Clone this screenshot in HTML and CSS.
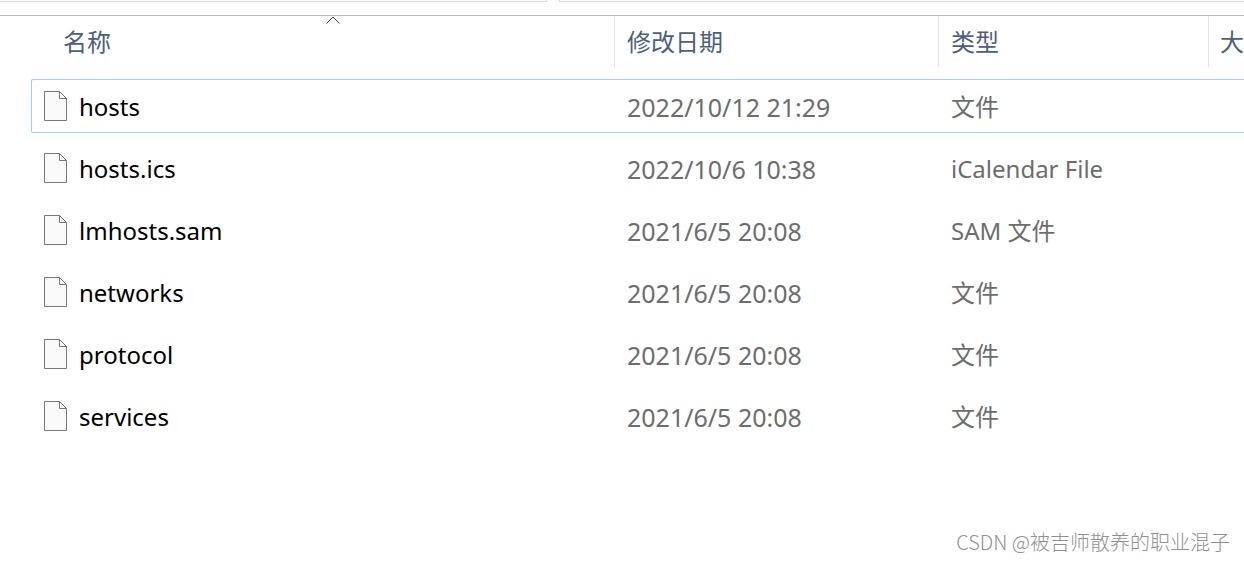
FILE: index.html
```
<!DOCTYPE html>
<html lang="zh-CN">
  <head>
    <meta charset="UTF-8" />
    <meta name="viewport" content="width=device-width, initial-scale=1.0" />
    <title>etc</title>
    <link rel="stylesheet" href="styles.css">
  </head>
  <body>
    <svg class="sprite" aria-hidden="true">
      <symbol id="file" viewBox="0 0 23 30">
        <path d="M.5 .5H15.500L22.500 7.500V29.500H.5Z" fill="#fafafa" stroke="#777" />
        <path d="M15.500 .5V7.500H22.500" fill="none" stroke="#777" />
      </symbol>
    </svg>

    <div class="toolbar">
      <div class="address"></div>
      <div class="search"></div>
    </div>

    <main class="files">
      <table>
        <colgroup>
          <col class="col-name" />
          <col class="col-date" />
          <col class="col-type" />
          <col />
        </colgroup>
        <thead>
          <tr>
            <th>
              <div class="head first">
                名称
                <svg class="sort" width="14" height="8" viewBox="0 0 14 8">
                  <path d="M.5 7.500L7 1L13.500 7.500" fill="none" stroke="#444" />
                </svg>
              </div>
            </th>
            <th><div class="head">修改日期</div></th>
            <th><div class="head">类型</div></th>
            <th><div class="head last">大</div></th>
          </tr>
        </thead>
        <tbody>
          <tr class="focused">
            <td><div class="name"><svg class="icon"><use href="#file" /></svg>hosts</div></td>
            <td class="date">2022/10/12 21:29</td>
            <td>文件</td>
            <td></td>
          </tr>
          <tr>
            <td><div class="name"><svg class="icon"><use href="#file" /></svg>hosts.ics</div></td>
            <td class="date">2022/10/6 10:38</td>
            <td>iCalendar File</td>
            <td></td>
          </tr>
          <tr>
            <td><div class="name"><svg class="icon"><use href="#file" /></svg>lmhosts.sam</div></td>
            <td class="date">2021/6/5 20:08</td>
            <td>SAM 文件</td>
            <td></td>
          </tr>
          <tr>
            <td><div class="name"><svg class="icon"><use href="#file" /></svg>networks</div></td>
            <td class="date">2021/6/5 20:08</td>
            <td>文件</td>
            <td></td>
          </tr>
          <tr>
            <td><div class="name"><svg class="icon"><use href="#file" /></svg>protocol</div></td>
            <td class="date">2021/6/5 20:08</td>
            <td>文件</td>
            <td></td>
          </tr>
          <tr>
            <td><div class="name"><svg class="icon"><use href="#file" /></svg>services</div></td>
            <td class="date">2021/6/5 20:08</td>
            <td>文件</td>
            <td></td>
          </tr>
        </tbody>
      </table>
    </main>

    <div class="watermark">CSDN @被吉师散养的职业混子</div>
  </body>
</html>
```

FILE: styles.css
```
* {
  margin: 0;
  padding: 0;
  box-sizing: border-box;
}

body {
  font-family: "Noto Sans", "Noto Sans CJK SC", sans-serif;
  font-size: 24px;
  line-height: 32px;
  background: #fff;
  color: #6d6d6d;
  min-height: 100vh;
  position: relative;
  overflow: hidden;
}

.sprite {
  position: absolute;
  width: 0;
  height: 0;
}

.toolbar {
  display: flex;
  gap: 12px;
  height: 16px;
  border-bottom: 1px solid #b8b8b8;
}

.address,
.search {
  height: 2px;
  border-bottom: 1px solid #d9d9d9;
}

.address {
  width: 44%;
  border-right: 1px solid #d9d9d9;
}

.search {
  flex: 1;
  border-left: 1px solid #d9d9d9;
}

.files {
  padding-left: 31px;
}

table {
  width: 100%;
  table-layout: fixed;
  border-collapse: collapse;
}

.col-name {
  width: 584px;
}

.col-date {
  width: 324px;
}

.col-type {
  width: 270px;
}

th {
  height: 59px;
  vertical-align: top;
  text-align: left;
  font-weight: normal;
  color: #4c607a;
}

.head {
  position: relative;
  height: 51px;
  padding: 10px 0 0 12px;
  border-right: 1px solid #e5e5e5;
  white-space: nowrap;
}

.head.first {
  padding-left: 32px;
}

.head.last {
  padding-left: 11px;
  border-right: none;
}

.sort {
  position: absolute;
  top: 0;
  left: 295px;
}

td {
  height: 62px;
  padding: 2px 0 0 12px;
  vertical-align: middle;
  white-space: nowrap;
}

.date {
  font-size: 25px;
}

.name {
  display: flex;
  align-items: flex-start;
  gap: 12px;
  padding-left: 1px;
  color: #000;
}

.icon {
  width: 23px;
  height: 30px;
  flex: none;
}

.focused {
  position: relative;
}

.focused::after {
  content: "";
  position: absolute;
  inset: 4px 0;
  border: 1px solid #99d1ff;
  border-right: none;
  border-radius: 2px 0 0 2px;
}

.watermark {
  position: absolute;
  right: 14px;
  bottom: 4px;
  font-family: "Noto Sans CJK SC", sans-serif;
  font-size: 20px;
  font-weight: 300;
  color: #909090;
}
```
